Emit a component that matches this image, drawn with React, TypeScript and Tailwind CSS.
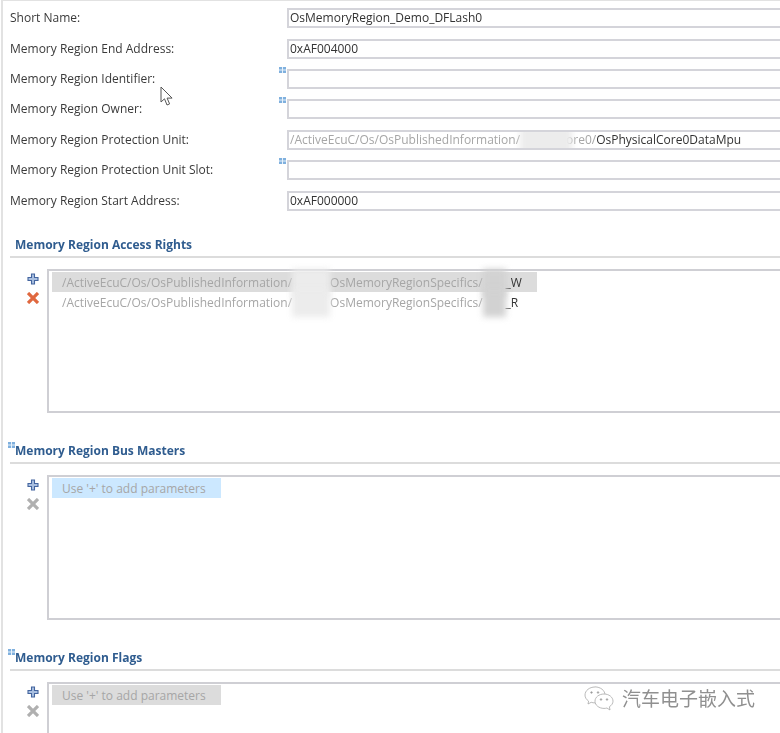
import React from 'react';

const FONT = "font-['Open_Sans','Noto_Sans_CJK_SC',sans-serif]";

const MarkerIcon = () => (
  <svg className="w-[7px] h-[6px]" viewBox="0 0 7 6">
    <rect width="7" height="6" fill="#7fb0de" />
    <path d="M3.5 0v6M0 3h7" stroke="#e8f2fb" strokeWidth="1" />
  </svg>
);

const PlusIcon = () => (
  <svg className="w-3 h-3" viewBox="0 0 12 12">
    <path d="M4.5 1h3v3.5H11v3H7.5V11h-3V7.5H1v-3h3.5z" fill="#a9bfe0" stroke="#44659f" strokeWidth="1.1" />
  </svg>
);

const DeleteIcon = ({ active }: { active: boolean }) => (
  <svg className="w-3 h-3" viewBox="0 0 12 12">
    <path d="M1 1l10 10M11 1L1 11" stroke={active ? '#e0683f' : '#b0b0b0'} strokeWidth="3.2" />
  </svg>
);

// blurred patch hiding part of a path, laid over the text next to it
const Smudge = ({ className }: { className: string }) => (
  <span className={`relative z-10 inline-block h-[28px] align-middle -my-2 blur-[3px] ${className}`}></span>
);

const Row = ({ label, marker, children }: { label: string; marker?: boolean; children?: React.ReactNode }) => (
  <div className="flex items-center h-[30.4px] pl-[7px]">
    <span className="w-[277px] shrink-0 text-[12px] text-[#3a3a3a]">{label}</span>
    <div className="relative flex-1 -mr-2">
      {marker && (
        <span className="absolute -left-[8px] -top-[2px] flex">
          <MarkerIcon />
        </span>
      )}
      <div className="h-5 border-2 border-r-0 border-[#d4d4da] bg-white pl-[1px] text-[12px] leading-4 text-[#333] whitespace-nowrap overflow-hidden">
        {children}
      </div>
    </div>
  </div>
);

const Section = ({
  title,
  marker,
  active,
  className,
  boxHeight,
  children,
}: {
  title: string;
  marker?: boolean;
  active?: boolean;
  className: string;
  boxHeight: string;
  children: React.ReactNode;
}) => (
  <section className={className}>
    <div className="relative ml-[7px] h-[22px] border-b-2 border-[#dcdcdc] pl-[5px] text-[12px] font-bold leading-[17px] text-[#2f5c8f]">
      {marker && (
        <span className="absolute -left-[2px] top-0 flex">
          <MarkerIcon />
        </span>
      )}
      {title}
    </div>
    <div className="flex mt-[11px]">
      <div className="w-[44px] shrink-0 flex flex-col items-end gap-[7px] pt-[4px] pr-[8px]">
        <PlusIcon />
        <DeleteIcon active={!!active} />
      </div>
      <div className={`flex-1 -mr-2 border-2 border-r-0 border-[#cfcfd4] pl-[3px] pt-[1px] text-[12px] ${boxHeight}`}>
        {children}
      </div>
    </div>
  </section>
);

const AccessRow = ({ suffix, selected }: { suffix: string; selected?: boolean }) => (
  <div className={`flex items-center h-5 w-[485px] pl-[10px] pt-[2px] whitespace-nowrap text-[#a6a6a6] ${selected ? 'bg-[#dcdcdc]' : ''}`}>
    /ActiveEcuC/Os/OsPublishedInformation/
    <Smudge className="w-[38px] bg-[#ececec]" />
    OsMemoryRegionSpecifics/
    <Smudge className="w-[23px] bg-[#d2d2d2]" />
    <span className="text-[#333]">{suffix}</span>
  </div>
);

const ParamHint = ({ color }: { color: string }) => (
  <div className={`flex items-center h-5 w-[169px] pl-[10px] pt-[2px] whitespace-nowrap text-[#a6a6a6] ${color}`}>
    Use '+' to add parameters
  </div>
);

export default function App() {
  return (
    <div className={`relative w-[780px] h-[733px] overflow-hidden bg-white ${FONT}`}>
      <div className="h-full ml-[1px] border-l-2 border-t border-[#e2e2e2] blur-[0.5px]">
        <div className="pt-[2px]">
          <Row label="Short Name:">OsMemoryRegion_Demo_DFLash0</Row>
          <Row label="Memory Region End Address:">0xAF004000</Row>
          <Row label="Memory Region Identifier:" marker />
          <Row label="Memory Region Owner:" marker />
          <Row label="Memory Region Protection Unit:">
            <span className="text-[#a6a6a6]">/ActiveEcuC/Os/OsPublishedInformation/</span>
            <Smudge className="w-[52px] -mr-[6px] bg-[#ececec]" />
            <span className="text-[#a6a6a6]">ore0/</span>
            OsPhysicalCore0DataMpu
          </Row>
          <Row label="Memory Region Protection Unit Slot:" marker />
          <Row label="Memory Region Start Address:">0xAF000000</Row>
        </div>

        <Section title="Memory Region Access Rights" active className="mt-[20px]" boxHeight="h-[144px]">
          <AccessRow suffix="_W" selected />
          <AccessRow suffix="_R" />
        </Section>

        <Section title="Memory Region Bus Masters" marker className="mt-[29px]" boxHeight="h-[145px]">
          <ParamHint color="bg-[#cce8ff]" />
        </Section>

        <Section title="Memory Region Flags" marker className="mt-[29px]" boxHeight="h-[144px]">
          <ParamHint color="bg-[#dcdcdc]" />
        </Section>
      </div>

      {/* Mouse pointer */}
      <svg className="absolute left-[160px] top-[86px] w-[15px] h-[22px]" viewBox="0 0 15 22">
        <path d="M1 1v15l3.5-3.2L7 19l2.6-1.1-2.5-5.8h5z" fill="#fff" stroke="#555" strokeWidth="1" />
      </svg>

      {/* Watermark */}
      <div className="absolute left-[584px] top-[685px] flex items-center gap-[7px]">
        <svg className="w-[31px] h-[26px]" viewBox="0 0 31 26" fill="#fff" stroke="#a8a8a8" strokeWidth="0.8">
          <path d="M11 1C5.5 1 1 4.6 1 9c0 2.5 1.4 4.6 3.6 6.1L4 18l3.2-1.7c1.2.4 2.5.6 3.8.6 5.5 0 10-3.6 10-8s-4.5-8-10-8z" />
          <path d="M20 8c-5 0-9 3.2-9 7.2s4 7.2 9 7.2c1 0 2-.1 2.9-.4L26 24l-.6-3.3c2.2-1.3 3.6-3.3 3.6-5.5C29 11.2 25 8 20 8z" />
          <circle cx="7.5" cy="6.5" r="0.8" fill="#8a8a8a" />
          <circle cx="14" cy="6.5" r="0.8" fill="#8a8a8a" />
          <circle cx="17" cy="13.5" r="0.8" fill="#8a8a8a" />
          <circle cx="23" cy="13.5" r="0.8" fill="#8a8a8a" />
        </svg>
        <span className="text-[19px] leading-[28px] whitespace-nowrap text-[#909090]">汽车电子嵌入式</span>
      </div>
    </div>
  );
}
